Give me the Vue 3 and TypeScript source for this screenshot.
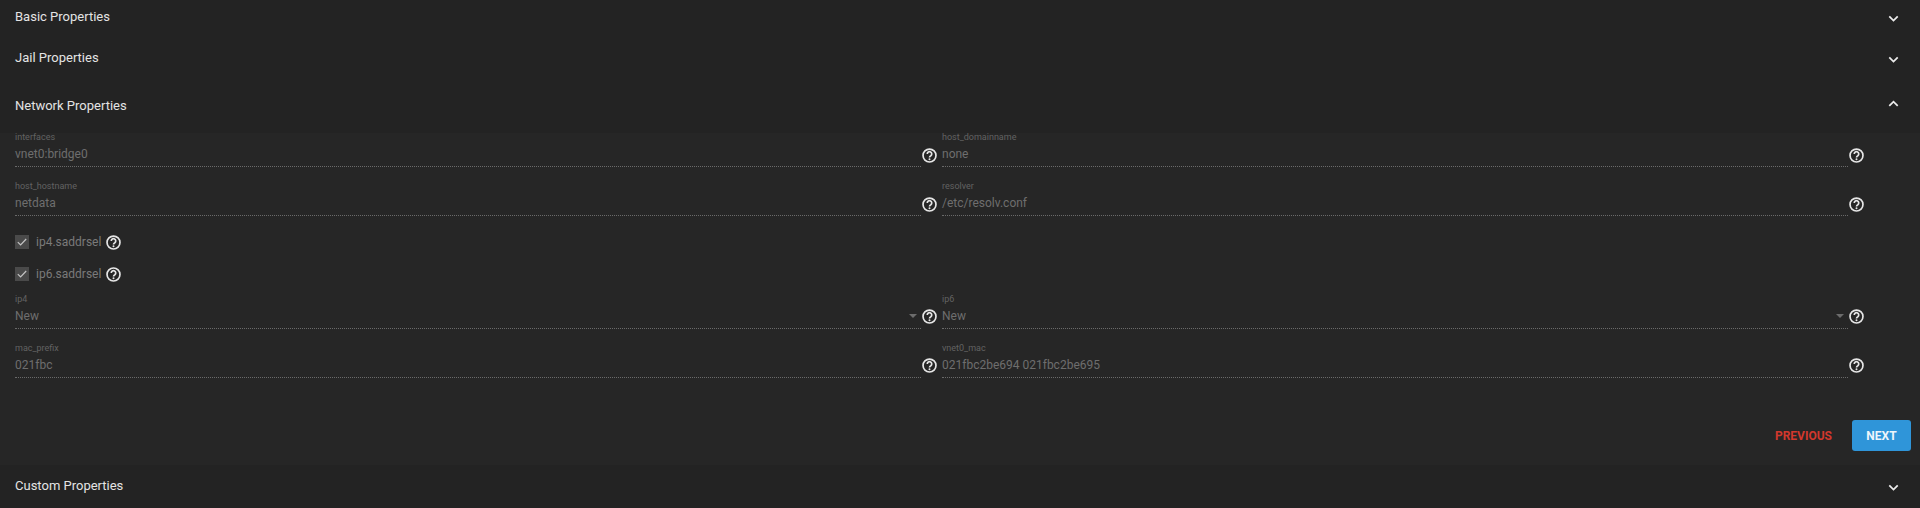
<script setup lang="ts">
interface Field { label: string; value: string; select?: boolean }
const rowsTop: Field[][] = [
  [{ label: 'interfaces', value: 'vnet0:bridge0' }, { label: 'host_domainname', value: 'none' }],
  [{ label: 'host_hostname', value: 'netdata' }, { label: 'resolver', value: '/etc/resolv.conf' }],
]
const checks = ['ip4.saddrsel', 'ip6.saddrsel']
const rowsBottom: Field[][] = [
  [{ label: 'ip4', value: 'New', select: true }, { label: 'ip6', value: 'New', select: true }],
  [{ label: 'mac_prefix', value: '021fbc' }, { label: 'vnet0_mac', value: '021fbc2be694 021fbc2be695' }],
]
</script>

<template>
  <div class="page">
    <header class="head h-basic">
      <span>Basic Properties</span>
      <svg class="chev" viewBox="0 0 12 8"><path d="M1.4 1.4 6 6l4.6-4.6" /></svg>
    </header>
    <header class="head h-jail">
      <span>Jail Properties</span>
      <svg class="chev" viewBox="0 0 12 8"><path d="M1.4 1.4 6 6l4.6-4.6" /></svg>
    </header>
    <header class="head h-net">
      <span>Network Properties</span>
      <svg class="chev" viewBox="0 0 12 8"><path d="M1.4 6.4 6 1.8l4.6 4.6" /></svg>
    </header>

    <section class="body">
      <div v-for="(row, i) in rowsTop" :key="'t' + i" class="row">
        <div v-for="f in row" :key="f.label" class="cell">
          <div class="field">
            <div class="label">{{ f.label }}</div>
            <div class="value">{{ f.value }}</div>
          </div>
          <svg class="help" viewBox="0 0 16 16">
            <circle cx="8" cy="8" r="6.9" />
            <path d="M5.6 6.3a2.4 2.4 0 1 1 3.8 2c-.9.6-1.4 1-1.4 1.9" />
            <circle class="dot" cx="8" cy="12" r="1.05" />
          </svg>
        </div>
      </div>

      <div class="checks">
        <div v-for="c in checks" :key="c" class="check">
          <span class="box">
            <svg viewBox="0 0 14 14"><path d="M2.8 7.2 5.6 10 11.2 4" /></svg>
          </span>
          <span class="check-text">{{ c }}</span>
          <svg class="help" viewBox="0 0 16 16">
            <circle cx="8" cy="8" r="6.9" />
            <path d="M5.6 6.3a2.4 2.4 0 1 1 3.8 2c-.9.6-1.4 1-1.4 1.9" />
            <circle class="dot" cx="8" cy="12" r="1.05" />
          </svg>
        </div>
      </div>

      <div v-for="(row, i) in rowsBottom" :key="'b' + i" class="row lower">
        <div v-for="f in row" :key="f.label" class="cell">
          <div class="field">
            <div class="label">{{ f.label }}</div>
            <div class="value">{{ f.value }}</div>
            <i v-if="f.select" class="caret"></i>
          </div>
          <svg class="help" viewBox="0 0 16 16">
            <circle cx="8" cy="8" r="6.9" />
            <path d="M5.6 6.3a2.4 2.4 0 1 1 3.8 2c-.9.6-1.4 1-1.4 1.9" />
            <circle class="dot" cx="8" cy="12" r="1.05" />
          </svg>
        </div>
      </div>

      <div class="actions">
        <button class="prev" type="button">PREVIOUS</button>
        <button class="next" type="button">NEXT</button>
      </div>
    </section>

    <header class="head h-custom">
      <span>Custom Properties</span>
      <svg class="chev" viewBox="0 0 12 8"><path d="M1.4 1.4 6 6l4.6-4.6" /></svg>
    </header>
  </div>
</template>

<style>
html, body { margin: 0; background: #232323; }
</style>

<style scoped>
.page {
  width: 1920px;
  height: 508px;
  overflow: hidden;
  background: #232323;
  font-family: Roboto, "Liberation Sans", sans-serif;
  display: flex;
  flex-direction: column;
}
.head {
  display: flex;
  justify-content: space-between;
  align-items: center;
  padding: 0 21px 0 15px;
  font-size: 13px;
  font-weight: 400;
  color: #e4e4e4;
  box-sizing: border-box;
  flex: none;
}
.h-basic { height: 32px; }
.h-jail { height: 50px; }
.h-net { height: 51px; padding-bottom: 5px; }
.h-custom { height: 43px; padding-bottom: 2px; }
.chev { width: 11px; height: 7.33px; margin-top: 5px; }
.chev path { fill: none; stroke: #ececec; stroke-width: 1.9; }
.h-net .chev { margin-top: -2px; }
.h-custom .chev { margin-top: 5px; }

.body {
  background: #262626;
  height: 332px;
  padding: 0 9px 0 15px;
  box-sizing: border-box;
  flex: none;
  display: flex;
  flex-direction: column;
}
.row {
  display: grid;
  grid-template-columns: 905.5px 906px;
  column-gap: 21.5px;
  height: 49px;
}
.cell { position: relative; }
.field {
  height: 33px;
  border-bottom: 1px dotted #6a6a6a;
  position: relative;
}
.label {
  font-size: 9px;
  line-height: 9px;
  color: #626262;
}
.value {
  font-size: 12px;
  line-height: 16px;
  margin-top: 4px;
  color: #6e6e6e;
}
.help {
  position: absolute;
  width: 15px;
  height: 15px;
  fill: none;
  stroke: #e6e6e6;
  stroke-width: 1.8;
}
.help .dot { fill: #e6e6e6; stroke: none; }
.cell .help { left: 907px; top: 15px; }
.lower .cell .help { top: 14px; }
.caret {
  position: absolute;
  right: 4px;
  top: 19px;
  border-left: 4px solid transparent;
  border-right: 4px solid transparent;
  border-top: 4px solid #6c6c6c;
}
.checks {
  height: 64px;
  padding-top: 4px;
  box-sizing: border-box;
  display: flex;
  flex-direction: column;
  gap: 18px;
}
.check {
  display: flex;
  align-items: center;
  height: 14px;
  font-size: 12px;
}
.box {
  width: 14px;
  height: 14px;
  background: #4a4a4a;
  display: flex;
  margin-right: 7px;
}
.box svg { width: 14px; height: 14px; fill: none; stroke: #c4c4c4; stroke-width: 1.2; }
.check-text { color: #7a7a7a; }
.check .help { position: static; margin-left: 5px; }
.actions {
  margin-top: 27px;
  height: 31px;
  display: flex;
  justify-content: flex-end;
  align-items: center;
  gap: 20px;
}
.prev, .next {
  font-family: inherit;
  font-size: 12px;
  font-weight: 700;
  border: 0;
  padding: 0;
  background: none;
}
.prev { color: #d2382d; }
.next {
  width: 59px;
  height: 31px;
  background: #2f95d9;
  color: #eef5fb;
  border-radius: 3px;
}
</style>
